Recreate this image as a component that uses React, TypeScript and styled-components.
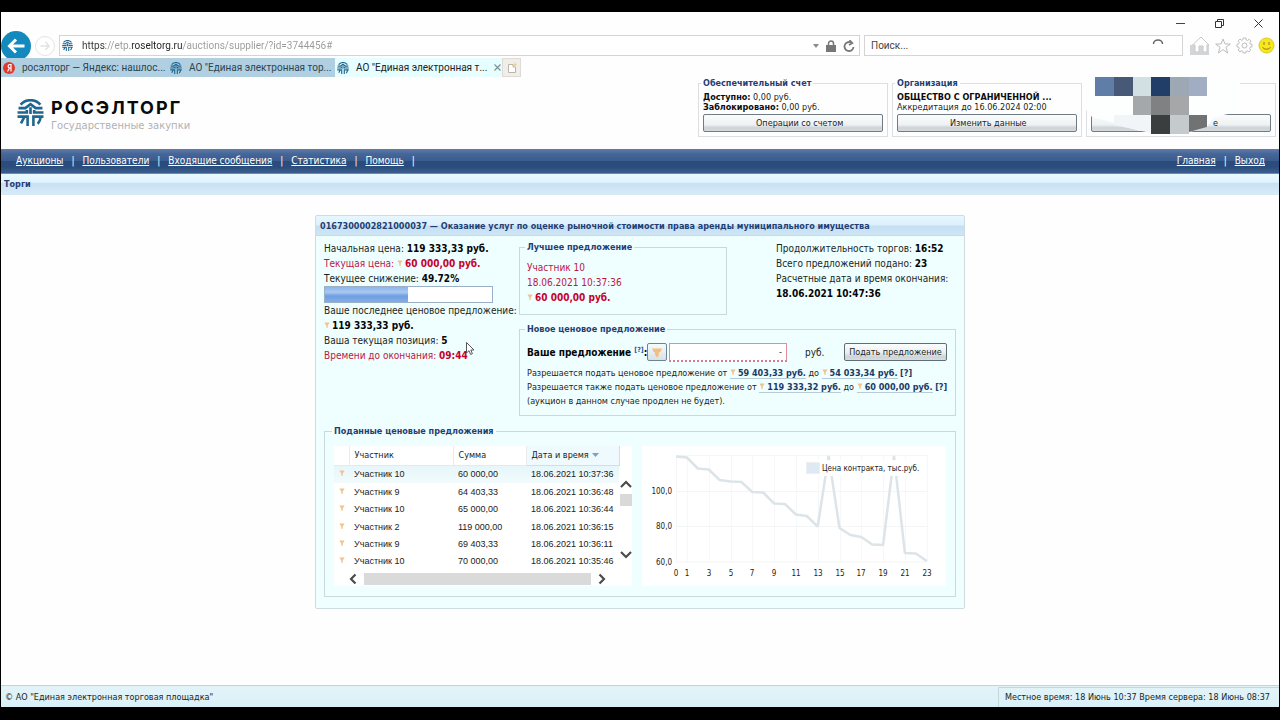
import React from "react";
import styled, { createGlobalStyle } from "styled-components";

const ui = `"DejaVu Sans Condensed", "Noto Sans", sans-serif`;
const chrome = `Roboto, "Noto Sans", sans-serif`;

const Global = createGlobalStyle`
  * { box-sizing: border-box; }
  body { margin: 0; background: #000; font: 10px/15px ${ui}; color: #1b1f22; }
  button, input { font-family: inherit; color: inherit; margin: 0; }
  a { color: inherit; }
  svg { display: block; flex: none; }
`;

const Screen = styled.div`
  display: flex; flex-direction: column; min-height: 100vh; background: #fefefe;
  border: solid #000; border-width: 12px 1px 13px;
`;

/* Browser chrome */
const TitleBar = styled.div`
  display: flex; justify-content: flex-end; height: 23px; padding-right: 1px;
`;
const WinButton = styled.button`
  display: flex; align-items: center; justify-content: center;
  width: 39px; height: 23px; padding: 0; border: 0; background: none;
`;
const AddressRow = styled.div`
  display: flex; align-items: center; height: 21px; padding-right: 4px; font-family: ${chrome};
`;
const BackButton = styled.button`
  display: flex; align-items: center; justify-content: center; width: 30px; height: 30px;
  padding: 0; border: 0; border-radius: 50%; background: #1489bd; margin: -5px 0;
`;
const ForwardButton = styled.button`
  display: flex; align-items: center; justify-content: center; width: 20px; height: 20px;
  padding: 0; border: 1px solid #e4e4e4; border-radius: 50%; background: #fff; margin: 0 4px 0 4px;
`;
const AddressBox = styled.div`
  display: flex; align-items: center; flex: 1 1 0; gap: 7px; height: 21px; padding: 0 4px 0 2px;
  border: 1px solid #d4d4d4; background: #fff;
`;
const AddressInput = styled.input`
  flex: 1; min-width: 0; border: 0; padding: 0 0 0 2px; outline: 0; font-size: 10px; line-height: 16px;
  color: transparent; -webkit-background-clip: text; background-clip: text;
  background-image: linear-gradient(90deg, #333 26px, #999 26px, #999 50px, #222 50px, #222 103px, #999 103px);
`;
const BarButton = styled.button`
  display: flex; padding: 0; border: 0; background: none;
`;
const SearchBox = styled.div`
  display: flex; align-items: center; flex: 0 1 319px; height: 21px; margin: 0 7px 0 4px;
  padding: 0 18px 0 6px; border: 1px solid #d4d4d4; background: #fff;
`;
const SearchInput = styled.input`
  flex: 1; min-width: 0; border: 0; padding: 0; outline: 0; background: none; font-size: 10px;
  &::placeholder { color: #444; opacity: 1; }
`;
const Tools = styled.div`
  display: flex; align-items: center; gap: 5px;
`;
const Tabs = styled.div`
  display: flex; height: 19px; margin-top: 2px; font-family: ${chrome};
`;
const Tab = styled.button<{ $active?: boolean }>`
  display: flex; align-items: center; gap: 7px; width: 167px; padding: 0 6px 0 2px; border: 0;
  background: ${(p) => (p.$active ? "#e6feff" : "#b0d0e2")}; color: ${(p) => (p.$active ? "#222" : "#2c4350")};
  font-size: 10px; line-height: 18px; text-align: left; white-space: nowrap;
`;
const TabText = styled.span`
  flex: 1;
`;
const NewTab = styled.button`
  display: flex; align-items: center; justify-content: center; width: 19px; padding: 0;
  border: 1px solid #dedad4; background: #f1ede8;
`;

/* Site header */
const Header = styled.header`
  display: flex; justify-content: space-between; height: 72px; padding: 1px 3px 0 16px;
`;
const Brand = styled.a`
  display: flex; gap: 7px; padding-top: 21px; text-decoration: none;
`;
const BrandName = styled.div`
  font: 700 18px/20px Inter, sans-serif; color: #0a0a0a; letter-spacing: 2px; margin-top: -1px;
`;
const BrandSub = styled.div`
  font: 10px/15px "DejaVu Sans", sans-serif; color: #b0b2b4;
`;
const Account = styled.div`
  display: flex; gap: 4px; position: relative; font-size: 9px; line-height: 10px;
`;
const Legend = styled.legend<{ $small?: boolean }>`
  margin-left: -2px; padding: 0 2px; font-weight: 700; font-size: 9px; color: #1f3f73;
  line-height: ${(p) => (p.$small ? 10 : 12)}px;
`;
const AccountCard = styled.fieldset<{ $bare?: boolean }>`
  display: flex; flex-direction: column; width: 190px; min-width: 0; border: 1px solid #dcdfe2;
  height: ${(p) => (p.$bare ? 54 : 59)}px; margin: ${(p) => (p.$bare ? 5 : 0)}px 0 0;
  padding: ${(p) => (p.$bare ? 8 : 4)}px 4px 4px;
`;
const Line = styled.div`
  min-height: 10px; white-space: nowrap;
`;
const Black = styled.b`
  color: #0c0c0c;
`;
const WideButton = styled.button<{ $right?: boolean }>`
  height: 18px; margin-top: 2px; padding: 0 52px; border: 1px solid #6f7c85; border-radius: 2px;
  background: linear-gradient(#fbfcfc, #eef2f4 60%, #ccd3d7 80%, #d6dbde);
  font-size: 9px; line-height: 14px; text-align: ${(p) => (p.$right ? "right" : "center")}; white-space: nowrap;
`;
const Mosaic = styled.svg`
  position: absolute; right: 34px; top: -3px;
`;
const Nav = styled.nav`
  display: flex; justify-content: space-between; height: 25px; padding: 0 14px 0 15px;
  border-bottom: 1px solid #6f89ad;
  background: linear-gradient(#617da6, #46669a 20%, #3b5c8f 48%, #294c7c 52%, #2a4d7e 75%, #3c5f90);
  color: #fff; font-size: 10px; line-height: 24px;
`;
const NavGroup = styled.div`
  display: flex; gap: 8px;
`;
const Crumb = styled.div`
  height: 21px; padding-left: 3px; border-bottom: 1px solid #d5e8f4;
  background: linear-gradient(#e9faff, #e0f3fe 42%, #c8e0f4 44%, #d6ebf8);
  font-weight: 700; font-size: 9px; line-height: 20px; color: #1f3f73;
`;

/* Auction panel */
const Main = styled.main`
  flex: 1; padding: 20px 0;
`;
const Panel = styled.section`
  width: 650px; max-width: 100%; margin: 0 auto; border: 1px solid #ccdcdf; border-radius: 2px; background: #effefe;
`;
const PanelTitle = styled.h1`
  margin: 0; height: 20px; padding-left: 4px; border-bottom: 1px solid #c4dbe8;
  background: linear-gradient(#e7f7ff, #dcf0fc 48%, #c4def3 52%, #cfe6f5);
  font-size: 9px; line-height: 20px; color: #1f3f73; white-space: nowrap;
`;
const PanelBody = styled.div`
  display: grid; grid-template-columns: 195px minmax(0, 1fr); padding: 5px 8px 11px;
`;
const Info = styled.div<{ $offset?: boolean }>`
  position: relative; margin-left: ${(p) => (p.$offset ? 49 : 0)}px; white-space: nowrap;
`;
const Row = styled.div<{ $red?: boolean }>`
  height: 15px; color: ${(p) => (p.$red ? "#bd1645" : "inherit")};
  b { color: ${(p) => (p.$red ? "#c6002e" : "#050505")}; }
`;
const Progress = styled.div`
  width: 169px; height: 17px; border: 1px solid #9bb0c6; background: #fff;
`;
const Bar = styled.div`
  height: 100%; background: linear-gradient(#8db4ea, #a9c8f3 35%, #6f9ee0 60%, #82ade8);
`;
const Pointer = styled.svg`
  position: absolute; left: 142px; top: 101px;
`;
const RightSide = styled.div`
  display: flex; flex-direction: column; gap: 8px;
`;
const Top = styled.div`
  display: flex;
`;
const Group = styled.fieldset`
  min-width: 0; margin: 0; padding: 7px 7px 8px; border: 1px solid #c9d8db;
`;
const Best = styled(Group)`
  width: 208px; padding-bottom: 9px;
`;
const Offer = styled(Group)`
  padding: 7px 8px 7px 7px;
`;
const OfferRow = styled.div`
  display: flex; align-items: center; height: 20px; margin-bottom: 4px; white-space: nowrap;
`;
const OfferLabel = styled.label`
  width: 120px; font-weight: 700; color: #050505;
  sup { font-size: 7px; line-height: 7px; color: #29569a; }
`;
const SmallButton = styled.button`
  display: flex; align-items: center; justify-content: center; width: 20px; height: 18px; padding: 0;
  border: 1px solid #6c8494; border-radius: 2px; background: linear-gradient(#f6fafb, #d9e1e6);
`;
const OfferInput = styled.input`
  width: 118px; height: 19px; margin-left: 2px; padding: 0 4px; border: 1px solid #dc8f9a;
  border-bottom: 2px dotted #d97a84; background: #fff; text-align: right; font-size: 9px;
`;
const Currency = styled.span`
  width: 57px; padding-left: 18px;
`;
const Submit = styled.button`
  flex: 1; height: 18px; padding: 0; border: 1px solid #5f6d76; border-radius: 2px;
  background: linear-gradient(#fcfdfd, #eaeef0 55%, #cdd4d8 80%, #d8dde0);
  font-size: 9px; line-height: 15px; white-space: nowrap;
`;
const Rule = styled.div`
  height: 14px; font-size: 9px; line-height: 14px; white-space: nowrap;
`;
const Amount = styled.a`
  border-bottom: 1px solid #b5cbd6; font-weight: 700; color: #1b3a66; text-decoration: none;
`;
const Hint = styled.a`
  font-weight: 700; color: #1b3a66; text-decoration: none;
`;
const Coin = styled.svg`
  display: inline-block; margin-right: 2px; vertical-align: 1px;
`;
const History = styled(Group)`
  grid-column: 1 / -1; display: flex; gap: 10px; margin-top: 9px; padding: 9px 10px 10px 9px;
`;
const GridBox = styled.div`
  display: flex; flex-direction: column; width: 298px; height: 140px; background: #fff;
`;
const GridTop = styled.div`
  display: flex;
`;
const Table = styled.table`
  width: 285px; height: 124px; border-collapse: collapse; table-layout: fixed;
  font: 9px/12px "Liberation Sans", sans-serif; color: #222;
  th, td { padding: 0 0 0 5px; text-align: left; font-weight: 400; white-space: nowrap; }
  th { height: 19px; border-right: 1px solid #e8ecef; border-bottom: 1px solid #e3e9ec; font-family: ${ui}; font-size: 9px; }
  th:last-child { background: #eefafd; border-color: #cfe0e8; }
  tbody tr:first-child { background: linear-gradient(#e6f6fa, #f2fbfc); }
`;
const Sort = styled.svg`
  display: inline-block; margin-left: 3px; vertical-align: 1px;
`;
const VScroll = styled.div`
  display: flex; flex-direction: column; align-items: center; width: 13px; padding: 32px 0 9px;
`;
const VThumb = styled.div`
  width: 12px; height: 12px; margin: 4px 0 auto; background: #d9d9d9;
`;
const HScroll = styled.div`
  display: flex; align-items: center; justify-content: space-between; height: 16px; padding: 1px 24px 0 13px;
`;
const HThumb = styled.div`
  width: 227px; height: 12px; background: #dadada;
`;
const ChartBox = styled.div`
  flex: 1; background: #fff;
`;

const Footer = styled.footer`
  display: flex; justify-content: space-between; height: 22px; padding: 1px 0 0 4px;
  border-top: 1px solid #c3d3d8; background: linear-gradient(#e3f4f8, #d9f0f9);
  font-size: 9px; line-height: 20px;
`;
const Clock = styled.div`
  padding: 0 9px 0 6px; border: 1px solid #c5d6dc; border-right: 0; border-bottom: 0; line-height: 18px;
`;

const Emblem = ({ size = 26 }: { size?: number }) => (
  <svg width={size} height={size} viewBox="0 0 26 26" fill="none" stroke="#1f6690" strokeWidth="2.5">
    <path d="M3.500 5.500A12.500 12.500 0 0 1 22.500 5.500" />
    <path d="M1.500 8.800H8L13 5L18 8.800H24.500" />
    <path d="M0.500 13H9.500V10.500M25.500 13H16.500V10.500M13 8V14.500" />
    <path d="M0.500 17H10.200V26M7 17.500L3.800 23.500" />
    <path d="M25.500 17H15.800V26M22.800 17.500Q22.300 21.500 20 24" />
  </svg>
);

const Price = () => (
  <Coin width="6" height="6" viewBox="0 0 6 6">
    <path d="M0.500 0.500H5.500L4.600 2.500H4L3.500 6H2.500L2 2.500H1.400Z" fill="#f1c48e" />
  </Coin>
);

const Chevron = ({ d }: { d: string }) => (
  <svg width="12" height="12" viewBox="0 0 12 12" fill="none" stroke="#4b4b4b" strokeWidth="2.200">
    <path d={d} />
  </svg>
);

const bids = [
  ["Участник 10", "60 000,00", "18.06.2021 10:37:36"],
  ["Участник 9", "64 403,33", "18.06.2021 10:36:48"],
  ["Участник 10", "65 000,00", "18.06.2021 10:36:44"],
  ["Участник 2", "119 000,00", "18.06.2021 10:36:15"],
  ["Участник 9", "69 403,33", "18.06.2021 10:36:11"],
  ["Участник 10", "70 000,00", "18.06.2021 10:35:46"],
];

const levels = [10.5, 11.5, 22.5, 23.5, 34, 35.5, 36, 46, 46.5, 57.5, 58, 68.5, 70, 80.5, 10, 82, 89, 91, 98.5, 99, 10, 107, 107.5, 115];
const xAt = (n: number) => 34 + n * 10.9;
const ticks = [0, 1, 3, 5, 7, 9, 11, 13, 15, 17, 19, 21, 23];

const Chart = () => (
  <svg width="304" height="140" viewBox="0 0 304 140" fontFamily={ui} fontSize="8" fill="#222">
    {ticks.map((t) => (
      <path key={t} d={`M${Math.round(xAt(t)) + 0.5} 9.5V116`} stroke="#f5f7f8" />
    ))}
    {[9.5, 45.5, 80.5, 116].map((y) => (
      <path key={y} d={`M34 ${y}H285`} stroke="#f3f5f6" />
    ))}
    <polyline fill="none" stroke="#dde4e8" strokeWidth="2.500" strokeLinejoin="bevel" points={levels.map((y, n) => `${xAt(n)},${y}`).join(" ")} />
    <rect x="163" y="14" width="119" height="16" fill="#fff" fillOpacity="0.900" />
    <rect x="164.500" y="16.500" width="13" height="11" fill="#dfe9f3" stroke="#eaf0f4" />
    <text x="180" y="25">Цена контракта, тыс.руб.</text>
    <text x="30" y="48" textAnchor="end">100,0</text>
    <text x="30" y="83" textAnchor="end">80,0</text>
    <text x="30" y="119" textAnchor="end">60,0</text>
    {ticks.map((t) => (
      <text key={t} x={Math.round(xAt(t))} y="130" textAnchor="middle">{t}</text>
    ))}
  </svg>
);

export default function App() {
  return (
    <Screen>
      <Global />
      <TitleBar>
        <WinButton aria-label="Свернуть"><svg width="9" height="9" stroke="#444"><path d="M0 4.500H9" /></svg></WinButton>
        <WinButton aria-label="Восстановить"><svg width="9" height="9" fill="none" stroke="#333"><path d="M0.500 2.500H6.500V8.500H0.500ZM2.500 2.500V0.500H8.500V6.500H6.500" /></svg></WinButton>
        <WinButton aria-label="Закрыть"><svg width="9" height="9" stroke="#333"><path d="M0.500 0.500L8.500 8.500M8.500 0.500L0.500 8.500" /></svg></WinButton>
      </TitleBar>
      <AddressRow>
        <BackButton aria-label="Назад">
          <svg width="18" height="16" viewBox="0 0 18 16" fill="none" stroke="#fff" strokeWidth="3"><path d="M9 1.500L2.500 8L9 14.500M3 8H17.500" /></svg>
        </BackButton>
        <ForwardButton aria-label="Вперёд">
          <svg width="10" height="10" fill="none" stroke="#e2e2e2" strokeWidth="1.500"><path d="M5.500 1L9 5L5.500 9M9 5H0.500" /></svg>
        </ForwardButton>
        <AddressBox>
          <Emblem size={11} />
          <AddressInput aria-label="Адрес" defaultValue="https://etp.roseltorg.ru/auctions/supplier/?id=3744456#" />
          <BarButton aria-label="Список адресов"><svg width="6" height="4"><path d="M0 0H6L3 4Z" fill="#8a8a8a" /></svg></BarButton>
          <svg width="10" height="12" viewBox="0 0 10 12"><path d="M0 5H10V12H0Z" fill="#777" /><path d="M2.500 5V3.500A2.500 2.500 0 0 1 7.500 3.500V5" fill="none" stroke="#777" strokeWidth="1.500" /></svg>
          <BarButton aria-label="Обновить"><svg width="12" height="12" fill="none" stroke="#777" strokeWidth="1.800"><path d="M10.500 7A4.500 4.500 0 1 1 8 2.500" /><path d="M6.500 0L9.500 3L6 5" strokeWidth="1.500" /></svg></BarButton>
        </AddressBox>
        <SearchBox>
          <SearchInput aria-label="Поиск" placeholder="Поиск..." />
          <BarButton aria-label="Найти"><svg width="12" height="16" fill="none" stroke="#666" strokeWidth="1.500"><path d="M1.500 6A4.500 4 0 0 1 10.500 6" /></svg></BarButton>
        </SearchBox>
        <Tools>
          <BarButton aria-label="Домой"><svg width="20" height="19" viewBox="0 0 20 19"><path d="M0 9H19V19H0Z" fill="#d3d6d8" /><path d="M2.500 9L11 1L19 9H17V16H13V10H9V16H5V9Z" fill="#fff" stroke="#c9c9c9" /></svg></BarButton>
          <BarButton aria-label="Избранное"><svg width="16" height="16" viewBox="0 0 16 16" fill="none" stroke="#bcbcbc"><path d="M8 1L10 6H15.300L11 9.300L12.600 15L8 11.600L3.400 15L5 9.300L0.700 6H6Z" /></svg></BarButton>
          <BarButton aria-label="Сервис"><svg width="17" height="17" viewBox="0 0 17 17" fill="none" stroke="#bcbcbc"><circle cx="8.500" cy="8.500" r="2.500" /><path d="M7.200 1H9.800L10.200 3L11.500 3.500L13.200 2.300L14.900 4.100L13.700 5.700L14.200 7L16 7.300V9.800L14.200 10.200L13.600 11.500L14.700 13.200L12.900 15L11.300 13.800L10.100 14.300L9.800 16H7.200L6.800 14.300L5.500 13.700L3.900 14.900L2.100 13L3.200 11.400L2.700 10.100L1 9.800V7.200L2.700 6.900L3.300 5.500L2.200 3.900L4 2.100L5.600 3.300L6.900 2.800Z" /></svg></BarButton>
          <BarButton aria-label="Отзыв"><svg width="17" height="17" viewBox="0 0 17 17"><circle cx="8.500" cy="8.500" r="7.500" fill="#f7e71c" stroke="#dcc927" /><path d="M6 5V8M11 5V8M4.500 10.500Q8.500 14 12.500 10.500" fill="none" stroke="#8a7a18" /></svg></BarButton>
        </Tools>
      </AddressRow>
      <Tabs>
        <Tab>
          <svg width="12" height="12" viewBox="0 0 12 12"><circle cx="6" cy="6" r="6" fill="#dc3a2f" /><path d="M8 9.500V2.500H6.500A1.800 1.800 0 0 0 6.500 6H8M6.500 6L4.500 9.500" fill="none" stroke="#fff" strokeWidth="1.200" /></svg>
          <TabText>росэлторг — Яндекс: нашлос...</TabText>
        </Tab>
        <Tab>
          <Emblem size={12} />
          <TabText>АО "Единая электронная тор...</TabText>
        </Tab>
        <Tab $active>
          <Emblem size={12} />
          <TabText>АО "Единая электронная т...</TabText>
          <svg width="7" height="7" stroke="#7c9298" strokeWidth="1.200"><path d="M0.500 0.500L6.500 6.500M6.500 0.500L0.500 6.500" /></svg>
        </Tab>
        <NewTab aria-label="Новая вкладка"><svg width="10" height="11"><path d="M1.500 2.500H6V5H8.500V10.500H1.500Z" fill="#fff" stroke="#b9b5ae" /><path d="M8 0L9 2L10 3L8.500 3.500L8 5L7 3.500L6 3L7.500 2Z" fill="#ecd08a" /></svg></NewTab>
      </Tabs>

      <Header>
        <Brand href="#">
          <Emblem size={27} />
          <div>
            <BrandName>РОСЭЛТОРГ</BrandName>
            <BrandSub>Государственные закупки</BrandSub>
          </div>
        </Brand>
        <Account>
          <AccountCard>
            <Legend $small>Обеспечительный счет</Legend>
            <Line><Black>Доступно:</Black> 0,00 руб.</Line>
            <Line><Black>Заблокировано:</Black> 0,00 руб.</Line>
            <WideButton>Операции со счетом</WideButton>
          </AccountCard>
          <AccountCard>
            <Legend $small>Организация</Legend>
            <Line><Black>ОБЩЕСТВО С ОГРАНИЧЕННОЙ ...</Black></Line>
            <Line>Аккредитация до 16.06.2024 02:00</Line>
            <WideButton>Изменить данные</WideButton>
          </AccountCard>
          <AccountCard $bare>
            <Line />
            <Line />
            <WideButton $right>е</WideButton>
          </AccountCard>
          <Mosaic width="162" height="60" viewBox="0 0 162 60">
            <path d="M5 0H160V34L148 39L134 42L127 52L110 57L60 56L34 48L12 42L5 34Z" fill="#fdfefe" />
            <path d="M15 2H34V21H15Z" fill="#5f7da6" />
            <path d="M34 2H53V21H34Z" fill="#485977" />
            <path d="M53 2H71V21H53Z" fill="#d2dfe3" />
            <path d="M71 2H90V21H71Z" fill="#203e68" />
            <path d="M90 2H109V21H90Z" fill="#9ca8b4" />
            <path d="M109 2H127V21H109Z" fill="#a0adc2" />
            <path d="M53 21H71V40H53Z" fill="#a4a8ab" />
            <path d="M71 21H90V40H71Z" fill="#7f8182" />
            <path d="M90 21H109V40H90Z" fill="#a5a7a8" />
            <path d="M34 40H71V58L34 50Z" fill="#f1f5f7" />
            <path d="M71 40H90V59H71Z" fill="#3b3e3f" />
            <path d="M90 40H109V59H90Z" fill="#c5cacc" />
            <path d="M109 40H127V52L109 57Z" fill="#707273" />
          </Mosaic>
        </Account>
      </Header>

      <Nav>
        <NavGroup>
          <a href="#">Аукционы</a><span>|</span>
          <a href="#">Пользователи</a><span>|</span>
          <a href="#">Входящие сообщения</a><span>|</span>
          <a href="#">Статистика</a><span>|</span>
          <a href="#">Помощь</a><span>|</span>
        </NavGroup>
        <NavGroup>
          <a href="#">Главная</a><span>|</span>
          <a href="#">Выход</a>
        </NavGroup>
      </Nav>
      <Crumb>Торги</Crumb>

      <Main>
        <Panel>
          <PanelTitle>0167300002821000037 — Оказание услуг по оценке рыночной стоимости права аренды муниципального имущества</PanelTitle>
          <PanelBody>
            <Info>
              <Row>Начальная цена: <b>119 333,33 руб.</b></Row>
              <Row $red>Текущая цена: <Price /><b>60 000,00 руб.</b></Row>
              <Row>Текущее снижение: <b>49.72%</b></Row>
              <Progress><Bar style={{ width: "49.72%" }} /></Progress>
              <Row>Ваше последнее ценовое предложение:</Row>
              <Row><Price /><b>119 333,33 руб.</b></Row>
              <Row>Ваша текущая позиция: <b>5</b></Row>
              <Row $red>Времени до окончания: <b>09:44</b></Row>
              <Pointer width="10" height="14" viewBox="0 0 10 14">
                <path d="M0.500 0.500V11L3 8.700L4.700 12.500L6.400 11.700L4.800 8H8Z" fill="#fff" stroke="#555" />
              </Pointer>
            </Info>
            <RightSide>
              <Top>
                <Best>
                  <Legend>Лучшее предложение</Legend>
                  <Row $red>Участник 10</Row>
                  <Row $red>18.06.2021 10:37:36</Row>
                  <Row $red><Price /><b>60 000,00 руб.</b></Row>
                </Best>
                <Info $offset>
                  <Row>Продолжительность торгов: <b>16:52</b></Row>
                  <Row>Всего предложений подано: <b>23</b></Row>
                  <Row>Расчетные дата и время окончания:</Row>
                  <Row><b>18.06.2021 10:47:36</b></Row>
                </Info>
              </Top>
              <Offer>
                <Legend>Новое ценовое предложение</Legend>
                <OfferRow>
                  <OfferLabel htmlFor="offer">Ваше предложение <sup>[?]</sup>:</OfferLabel>
                  <SmallButton aria-label="Подставить цену"><svg width="10" height="9" viewBox="0 0 10 9"><path d="M0 0.500H10L8.500 4H7.500L6 9H4L2.500 4H1.500Z" fill="#f1bf83" /></svg></SmallButton>
                  <OfferInput id="offer" defaultValue="-" />
                  <Currency>руб.</Currency>
                  <Submit>Подать предложение</Submit>
                </OfferRow>
                <Rule>Разрешается подать ценовое предложение от <Amount href="#"><Price />59 403,33 руб.</Amount> до <Amount href="#"><Price />54 033,34 руб.</Amount> <Hint href="#">[?]</Hint></Rule>
                <Rule>Разрешается также подать ценовое предложение от <Amount href="#"><Price />119 333,32 руб.</Amount> до <Amount href="#"><Price />60 000,00 руб.</Amount> <Hint href="#">[?]</Hint></Rule>
                <Rule>(аукцион в данном случае продлен не будет).</Rule>
              </Offer>
            </RightSide>
            <History>
              <Legend>Поданные ценовые предложения</Legend>
              <GridBox>
                <GridTop>
                  <Table>
                    <colgroup><col width="15" /><col width="104" /><col width="73" /><col width="93" /></colgroup>
                    <thead>
                      <tr>
                        <th aria-label="Валюта" /><th>Участник</th><th>Сумма</th>
                        <th>Дата и время<Sort width="7" height="4"><path d="M0 0H7L3.500 4Z" fill="#7fa0b8" /></Sort></th>
                      </tr>
                    </thead>
                    <tbody>
                      {bids.map((b) => (
                        <tr key={b[2]}>
                          <td><Price /></td><td>{b[0]}</td><td>{b[1]}</td><td>{b[2]}</td>
                        </tr>
                      ))}
                    </tbody>
                  </Table>
                  <VScroll>
                    <Chevron d="M1 9L6 4L11 9" />
                    <VThumb />
                    <Chevron d="M1 3L6 8L11 3" />
                  </VScroll>
                </GridTop>
                <HScroll>
                  <Chevron d="M8.500 1.500L4 6L8.500 10.500" />
                  <HThumb />
                  <Chevron d="M3.500 1.500L8 6L3.500 10.500" />
                </HScroll>
              </GridBox>
              <ChartBox><Chart /></ChartBox>
            </History>
          </PanelBody>
        </Panel>
      </Main>

      <Footer>
        <span>© АО "Единая электронная торговая площадка"</span>
        <Clock>Местное время: 18 Июнь 10:37 Время сервера: 18 Июнь 08:37</Clock>
      </Footer>
    </Screen>
  );
}
